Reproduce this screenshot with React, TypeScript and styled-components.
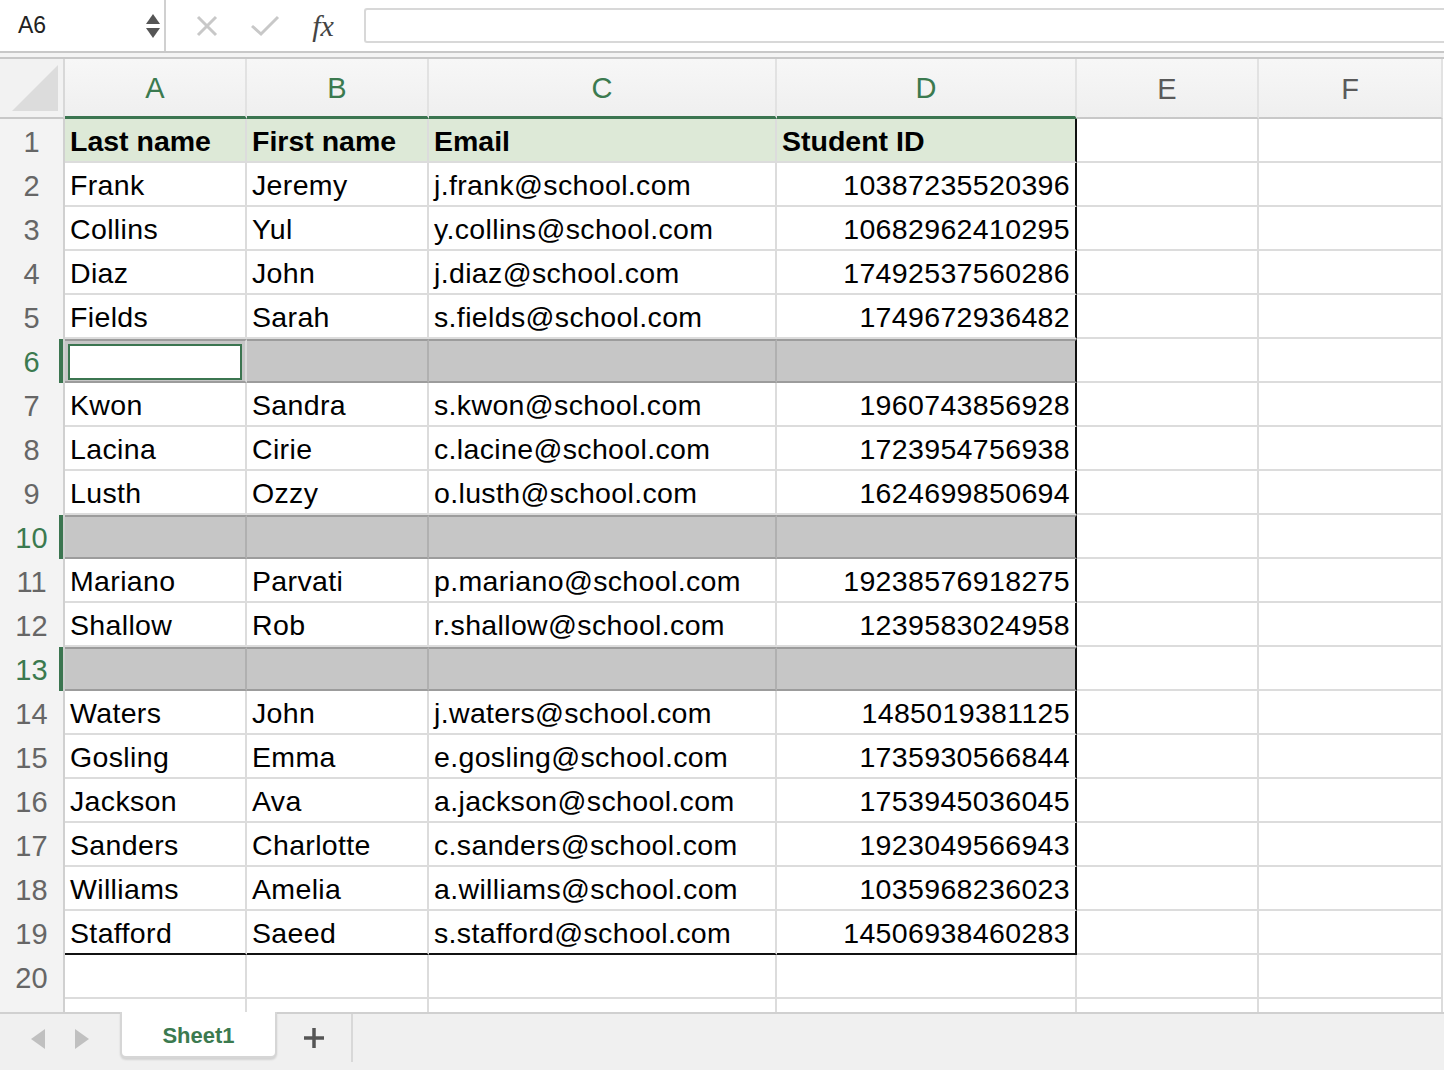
import React from "react";
import styled, { createGlobalStyle, css } from "styled-components";

const Global = createGlobalStyle`
  html, body { margin: 0; padding: 0; background: #fff; overflow: hidden; }
  body { font-family: "Liberation Sans", Arial, sans-serif; }
`;

const COLS = "65px 182px 182px 348px 300px 182px 184px";

const Page = styled.div`
  width: 1444px; height: 1070px; display: flex; flex-direction: column; overflow: hidden;
`;
const FormulaBar = styled.div`
  height: 51px; display: flex; align-items: stretch; background: #fff;
  border-bottom: 2px solid #c8c8c8;
`;
const NameBox = styled.div`
  width: 166px; display: flex; align-items: center; justify-content: space-between;
  padding: 0 4px 0 18px; box-sizing: border-box; border-right: 2px solid #d0d0d0;
  font-size: 23px; color: #222;
`;
const Spinner = styled.div`
  display: flex; flex-direction: column; gap: 4px; align-items: center;
`;
const Tool = styled.div<{ $first?: boolean }>`
  width: 58px; display: flex; align-items: center; justify-content: center;
  margin-left: ${p => (p.$first ? "12px" : "0")};
`;
const Fx = styled.span`
  font-family: "Liberation Serif", serif; font-style: italic; font-size: 30px; color: #444;
`;
const Input = styled.div`
  flex: 1; margin: 8px 0 8px 12px; border: 2px solid #d8d8d8; border-right: none; border-radius: 3px 0 0 3px;
`;
const Gap = styled.div`
  height: 4px; border-bottom: 2px solid #c8c8c8; background: #f4f4f4;
`;
const Sheet = styled.div`
  flex: 1; overflow: hidden; display: grid; grid-template-columns: ${COLS};
  grid-auto-rows: 44px; grid-template-rows: 60px; align-content: start;
`;
const ColHead = styled.div<{ $green?: boolean }>`
  background: linear-gradient(#f7f7f7, #efefef); border-right: 2px solid #e2e2e2;
  display: flex; align-items: center; justify-content: center; padding-top: 2px;
  font-size: 29px; color: ${p => (p.$green ? "#3b7a4f" : "#5a5a5a")};
  ${p => p.$green ? "border-bottom: 3px solid #3b7550;" : "border-bottom: 2px solid #c8c8c8;"}
  box-sizing: border-box;
`;
const Corner = styled.div`
  background: #f2f2f2; border-right: 2px solid #d8d8d8; border-bottom: 2px solid #c8c8c8;
  position: relative; box-sizing: border-box;
  &::after { content: ""; position: absolute; right: 5px; bottom: 6px; width: 0; height: 0;
    border-left: 46px solid transparent; border-bottom: 46px solid #dcdcdc; }
`;
const RowHead = styled.div<{ $sel?: boolean }>`
  background: #f3f3f3; border-right: 2px solid #d0d0d0; box-sizing: border-box;
  display: flex; align-items: center; justify-content: center; font-size: 29px; padding-top: 2px;
  color: ${p => (p.$sel ? "#3b7a4f" : "#666")};
  ${p => p.$sel && css`box-shadow: inset -4px 0 0 #3b7550;`}
`;
const Cell = styled.div<{ $kind: "head" | "data" | "sel" | "active" | "empty"; $right?: boolean; $edge?: boolean; $last?: boolean }>`
  box-sizing: border-box; display: flex; align-items: center; padding: 3px 5px 0;
  font-size: 28.5px; letter-spacing: 0.35px; color: #000; white-space: nowrap; overflow: hidden;
  border-right: 2px solid #dcdcdc; border-bottom: 2px solid #dcdcdc;
  justify-content: ${p => (p.$right ? "flex-end" : "flex-start")};
  ${p => p.$kind === "head" && css`background: #dde9d7; font-weight: 700; letter-spacing: 0;`}
  ${p => p.$kind === "sel" && css`background: #c6c6c6; border-right-color: #b0b0b0; border-bottom-color: #9c9c9c; border-top: 2px solid #9c9c9c;`}
  ${p => p.$kind === "active" && css`background: #c6c6c6; border-bottom-color: #9c9c9c; border-top: 2px solid #9c9c9c; padding: 3px 3px 1px 3px;`}
  ${p => p.$edge && css`border-right: 2px solid #111;`}
  ${p => p.$last && css`border-bottom: 2px solid #111;`}
`;
const ActiveBox = styled.div`
  width: 100%; height: 100%; background: #fff; border: 2px solid #3b7550; box-sizing: border-box;
`;
const TabBar = styled.div`
  height: 58px; background: #f0f0f0; border-top: 2px solid #d0d0d0; display: flex; align-items: flex-start;
  box-sizing: border-box;
`;
const Arrows = styled.div`
  width: 120px; height: 50px; display: flex; align-items: center; justify-content: center; gap: 30px;
`;
const Tab = styled.div`
  width: 157px; height: 46px; margin-top: -2px; background: #fff; border: 2px solid #d6d6d6; border-top: none;
  border-radius: 0 0 6px 6px; box-sizing: border-box; display: flex; align-items: center; justify-content: center;
  padding-top: 4px; font-weight: 700; font-size: 22px; color: #3b7a4f; box-shadow: 0 2px 2px rgba(0,0,0,0.12);
`;
const Plus = styled.div`
  width: 76px; height: 48px; display: flex; align-items: center; justify-content: center;
  border-right: 2px solid #d8d8d8; box-sizing: border-box;
`;

const data: [string, string, string, string][] = [
  ["Frank", "Jeremy", "j.frank@school.com", "10387235520396"],
  ["Collins", "Yul", "y.collins@school.com", "10682962410295"],
  ["Diaz", "John", "j.diaz@school.com", "17492537560286"],
  ["Fields", "Sarah", "s.fields@school.com", "1749672936482"],
  ["", "", "", ""],
  ["Kwon", "Sandra", "s.kwon@school.com", "1960743856928"],
  ["Lacina", "Cirie", "c.lacine@school.com", "1723954756938"],
  ["Lusth", "Ozzy", "o.lusth@school.com", "1624699850694"],
  ["", "", "", ""],
  ["Mariano", "Parvati", "p.mariano@school.com", "19238576918275"],
  ["Shallow", "Rob", "r.shallow@school.com", "1239583024958"],
  ["", "", "", ""],
  ["Waters", "John", "j.waters@school.com", "1485019381125"],
  ["Gosling", "Emma", "e.gosling@school.com", "1735930566844"],
  ["Jackson", "Ava", "a.jackson@school.com", "1753945036045"],
  ["Sanders", "Charlotte", "c.sanders@school.com", "1923049566943"],
  ["Williams", "Amelia", "a.williams@school.com", "1035968236023"],
  ["Stafford", "Saeed", "s.stafford@school.com", "14506938460283"],
];
const selRows = new Set([6, 10, 13]);

export default function App() {
  const rows: React.ReactNode[] = [];
  rows.push(
    <React.Fragment key="r1">
      <RowHead>1</RowHead>
      {["Last name", "First name", "Email", "Student ID"].map((t, i) => (
        <Cell key={i} $kind="head" $edge={i === 3}>{t}</Cell>
      ))}
      <Cell $kind="empty" /><Cell $kind="empty" />
    </React.Fragment>
  );
  data.forEach((r, idx) => {
    const n = idx + 2;
    const sel = selRows.has(n);
    rows.push(
      <React.Fragment key={n}>
        <RowHead $sel={sel}>{n}</RowHead>
        {r.map((t, i) => (
          <Cell key={i} $kind={sel ? (n === 6 && i === 0 ? "active" : "sel") : "data"} $right={i === 3}
            $edge={i === 3} $last={n === 19}>
            {n === 6 && i === 0 ? <ActiveBox /> : t}
          </Cell>
        ))}
        <Cell $kind="empty" /><Cell $kind="empty" />
      </React.Fragment>
    );
  });
  rows.push(
    <React.Fragment key={20}>
      <RowHead>20</RowHead>
      {[0, 1, 2, 3, 4, 5].map(i => <Cell key={i} $kind="empty" />)}
    </React.Fragment>
  );
  rows.push(
    <React.Fragment key={21}>
      <RowHead />
      {[0, 1, 2, 3, 4, 5].map(i => <Cell key={i} $kind="empty" />)}
    </React.Fragment>
  );
  return (
    <Page>
      <Global />
      <FormulaBar>
        <NameBox>
          A6
          <Spinner>
            <svg width="14" height="10"><path d="M7 0 L14 10 L0 10 Z" fill="#555" /></svg>
            <svg width="14" height="10"><path d="M0 0 L14 0 L7 10 Z" fill="#555" /></svg>
          </Spinner>
        </NameBox>
        <Tool $first>
          <svg width="24" height="24" viewBox="0 0 24 24"><path d="M3 3 L21 21 M21 3 L3 21" stroke="#c8c8c8" strokeWidth="3" /></svg>
        </Tool>
        <Tool>
          <svg width="30" height="24" viewBox="0 0 30 24"><path d="M2 12 L11 20 L28 3" stroke="#c8c8c8" strokeWidth="3" fill="none" /></svg>
        </Tool>
        <Tool><Fx>fx</Fx></Tool>
        <Input />
      </FormulaBar>
      <Gap />
      <Sheet>
        <Corner />
        {["A", "B", "C", "D", "E", "F"].map((c, i) => (
          <ColHead key={c} $green={i < 4}>{c}</ColHead>
        ))}
        {rows}
      </Sheet>
      <TabBar>
        <Arrows>
          <svg width="14" height="20"><path d="M14 0 L0 10 L14 20 Z" fill="#c0c0c0" /></svg>
          <svg width="14" height="20"><path d="M0 0 L14 10 L0 20 Z" fill="#c0c0c0" /></svg>
        </Arrows>
        <Tab>Sheet1</Tab>
        <Plus>
          <svg width="22" height="22" viewBox="0 0 22 22"><path d="M11 1 V21 M1 11 H21" stroke="#555" strokeWidth="3.5" /></svg>
        </Plus>
      </TabBar>
    </Page>
  );
}
